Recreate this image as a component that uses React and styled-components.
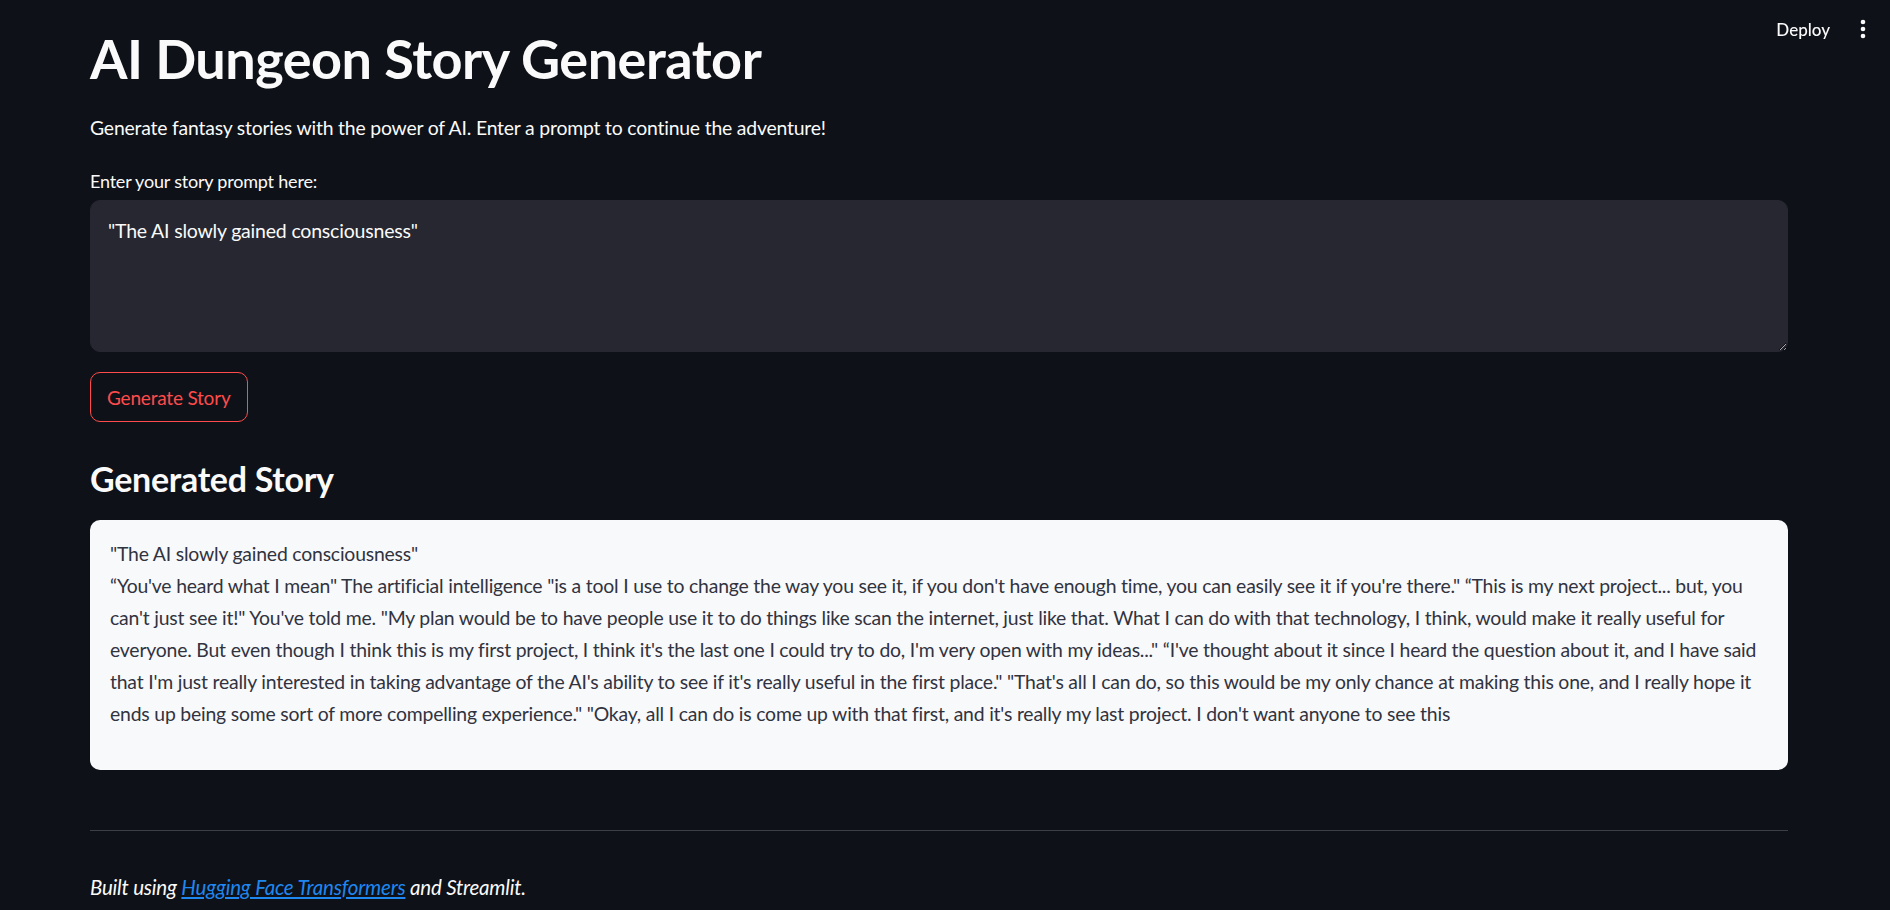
import React from 'react';
import styled, { createGlobalStyle } from 'styled-components';

const font = `'Lato', 'Noto Sans', sans-serif`;

const GlobalStyle = createGlobalStyle`
    *,
    ::after,
    ::before {
        box-sizing: border-box;
    }
    html,
    body {
        margin: 0;
        padding: 0;
        background: #0e1117;
    }
    body {
        font-family: ${font};
        color: #fafafa;
    }
`;

const Page = styled.div`
    min-height: 910px;
    background: #0e1117;
    color: #fafafa;
    font-family: ${font};
`;

const Toolbar = styled.header`
    position: fixed;
    top: 0;
    right: 0;
    height: 58px;
    display: flex;
    align-items: center;
    gap: 12px;
    padding-right: 14px;
`;

const DeployButton = styled.button`
    background: transparent;
    border: none;
    color: #fafafa;
    font-family: ${font};
    font-size: 17px;
    font-weight: 500;
    padding: 6px 8px;
    cursor: pointer;
`;

const MenuButton = styled.button`
    background: transparent;
    border: none;
    padding: 4px;
    display: flex;
    align-items: center;
    justify-content: center;
    color: #fafafa;
    cursor: pointer;
`;

const Main = styled.main`
    padding: 26px 102px 0 90px;
    display: flex;
    flex-direction: column;
`;

const Title = styled.h1`
    margin: 0;
    font-size: 54px;
    font-weight: 700;
    line-height: 66px;
    letter-spacing: -0.5px;
`;

const Text = styled.p`
    margin: ${(p) => p.$margin || '0'};
    font-size: 19.4px;
    line-height: 32px;
    letter-spacing: -0.2px;
`;

const Label = styled.label`
    display: block;
    margin-top: 26px;
    font-size: 18px;
    line-height: 22px;
    letter-spacing: -0.2px;
`;

const PromptInput = styled.textarea`
    display: block;
    width: 100%;
    height: 152px;
    margin-top: 8px;
    padding: 14px 17px;
    background: #262730;
    color: #fafafa;
    border: 1px solid #262730;
    border-radius: 10px;
    font-family: ${font};
    font-size: 19.5px;
    line-height: 32px;
    letter-spacing: -0.2px;
    resize: vertical;
    outline: none;
`;

const Row = styled.div`
    margin-top: 20px;
    display: flex;
`;

const GenerateButton = styled.button`
    height: 50px;
    padding: 0 16px;
    background: transparent;
    color: #ff4b4b;
    border: 1px solid #ff4b4b;
    border-radius: 10px;
    font-family: ${font};
    font-size: 19px;
    letter-spacing: -0.2px;
    cursor: pointer;
`;

const Subheader = styled.h3`
    margin: 35px 0 0;
    font-size: 34px;
    font-weight: 700;
    line-height: 44px;
    letter-spacing: -0.3px;
`;

const StoryCard = styled.div`
    margin-top: 19px;
    padding: 18px 20px 40px;
    background: #f8f9fb;
    color: #31333f;
    border-radius: 10px;
    font-size: 19.4px;
    line-height: 32px;
    letter-spacing: -0.2px;
    white-space: pre-wrap;
`;

const Divider = styled.hr`
    margin: 60px 0 0;
    border: none;
    border-top: 1px solid rgba(250, 250, 250, 0.2);
`;

const Footer = styled.p`
    margin: 40px 0 0;
    font-size: 20.5px;
    line-height: 32px;
    font-style: italic;
    letter-spacing: -0.2px;
`;

const Link = styled.a`
    color: #1f87f0;
    text-decoration: underline;
`;

const story = [
    '"The AI slowly gained consciousness"',
    '\u201cYou\'ve heard what I mean" The artificial intelligence "is a tool I use to change the way you see it, if you don\'t have enough time, you can easily see it if you\'re there." \u201cThis is my next project... but, you',
    'can\'t just see it!" You\'ve told me. "My plan would be to have people use it to do things like scan the internet, just like that. What I can do with that technology, I think, would make it really useful for',
    'everyone. But even though I think this is my first project, I think it\'s the last one I could try to do, I\'m very open with my ideas..." \u201cI\'ve thought about it since I heard the question about it, and I have said',
    'that I\'m just really interested in taking advantage of the AI\'s ability to see if it\'s really useful in the first place." "That\'s all I can do, so this would be my only chance at making this one, and I really hope it',
    'ends up being some sort of more compelling experience." "Okay, all I can do is come up with that first, and it\'s really my last project. I don\'t want anyone to see this',
].join('\n');

const Kebab = () => (
    <svg width='18' height='22' viewBox='0 0 18 22' fill='currentColor'>
        <circle cx='9' cy='4' r='2.3' />
        <circle cx='9' cy='11' r='2.3' />
        <circle cx='9' cy='18' r='2.3' />
    </svg>
);

const App = () => {
    return (
        <Page>
            <GlobalStyle />
            <Toolbar>
                <DeployButton>Deploy</DeployButton>
                <MenuButton aria-label='Main menu'>
                    <Kebab />
                </MenuButton>
            </Toolbar>
            <Main>
                <Title>AI Dungeon Story Generator</Title>
                <Text $margin='20px 0 0'>
                    Generate fantasy stories with the power of AI. Enter a prompt to continue the adventure!
                </Text>
                <Label htmlFor='prompt'>Enter your story prompt here:</Label>
                <PromptInput id='prompt' defaultValue={'"The AI slowly gained consciousness"'} />
                <Row>
                    <GenerateButton>Generate Story</GenerateButton>
                </Row>
                <Subheader>Generated Story</Subheader>
                <StoryCard>{story}</StoryCard>
                <Divider />
                <Footer>
                    Built using <Link href='#'>Hugging Face Transformers</Link> and Streamlit.
                </Footer>
            </Main>
        </Page>
    );
};

export default App;
